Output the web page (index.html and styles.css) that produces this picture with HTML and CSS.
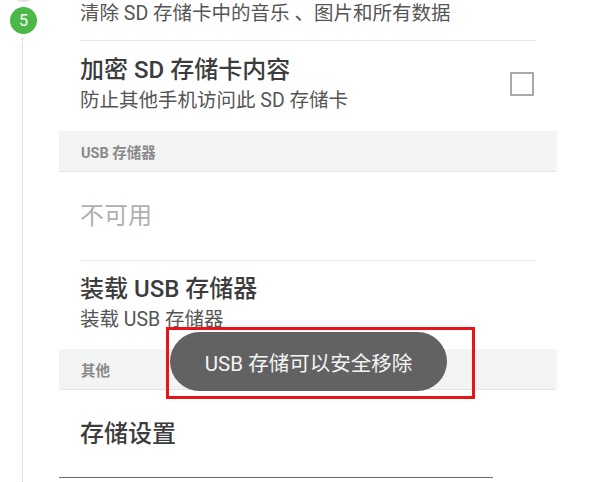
FILE: index.html
```html
<!DOCTYPE html>
<html lang="zh-CN">
<head>
<meta charset="utf-8">
<link rel="stylesheet" href="styles.css">
</head>
<body>
<div class="page">
  <div class="rail">
    <div class="step step-prev"></div>
    <div class="step step-current">5</div>
    <div class="rail-line"></div>
  </div>
  <div class="panel">
    <div class="row row-cut">
      <div class="sub">清除 SD 存储卡中的音乐 、图片和所有数据</div>
    </div>
    <div class="row row-check">
      <div class="texts">
        <div class="title">加密 SD 存储卡内容</div>
        <div class="sub">防止其他手机访问此 SD 存储卡</div>
      </div>
      <div class="checkbox"></div>
    </div>
    <div class="header">USB 存储器</div>
    <div class="row row-single">
      <div class="title disabled">不可用</div>
    </div>
    <div class="row row-double">
      <div class="texts">
        <div class="title">装载 USB 存储器</div>
        <div class="sub">装载 USB 存储器</div>
      </div>
    </div>
    <div class="header">其他</div>
    <div class="row row-single row-last">
      <div class="title">存储设置</div>
    </div>
  </div>
  <div class="toast">USB 存储可以安全移除</div>
  <div class="highlight"></div>
</div>
</body>
</html>
```
FILE: styles.css
```css
html, body {
  margin: 0;
  padding: 0;
  background: #fff;
}
body {
  font-family: Roboto, "Noto Sans CJK SC", sans-serif;
  overflow: hidden;
}
.page {
  position: relative;
  width: 593px;
  height: 482px;
  display: flex;
  overflow: hidden;
}
.rail {
  width: 59px;
  flex: none;
  position: relative;
}
.step {
  position: absolute;
  left: 10px;
  width: 27px;
  height: 27px;
  border-radius: 50%;
  display: flex;
  align-items: center;
  justify-content: center;
  color: #fff;
  font-size: 16px;
  font-family: Roboto, sans-serif;
}
.step-prev {
  top: -25px;
  background: #e3e3e3;
}
.step-current {
  top: 7px;
  background: #4cb848;
}
.rail-line {
  position: absolute;
  left: 22px;
  top: 38px;
  bottom: 0;
  border-left: 1px dotted #c8c8c8;
}
.panel {
  width: 500px;
  flex: none;
  display: flex;
  flex-direction: column;
}
.row {
  margin: 0 23px 0 21px;
  border-bottom: 1px solid #e8e8e8;
  display: flex;
  align-items: center;
}
.row-cut {
  height: 40px;
  align-items: flex-start;
}
.row-cut .sub {
  margin-top: -2px;
}
.row-check {
  height: 90px;
  border-bottom: none;
  justify-content: space-between;
}
.row-single {
  height: 88px;
}
.row-double {
  height: 88px;
  border-bottom: none;
}
.row-last {
  height: 87px;
  border-bottom: 1px solid #6a6a6a;
  margin-left: 0;
  padding-left: 21px;
  margin-right: 66px;
}
.texts {
  display: flex;
  flex-direction: column;
}
.title {
  font-size: 24px;
  color: #3c3c3c;
  line-height: 30px;
  font-weight: 500;
}
.title.disabled {
  color: #b0b0b0;
  font-weight: 400;
}
.sub {
  font-size: 19.5px;
  color: #555;
  line-height: 32px;
}
.row-last .title {
  margin-top: 1px;
}
.checkbox {
  width: 20px;
  height: 20px;
  border: 2px solid #a8a8a8;
  border-radius: 1px;
  margin-right: 2px;
  margin-top: -4px;
}
.header {
  height: 40px;
  background: #f2f3f3;
  border-bottom: 1px solid #e4e4e4;
  box-shadow: 3px 0 0 #f7f7f7;
  padding-left: 22px;
  display: flex;
  align-items: center;
  font-size: 14.5px;
  font-weight: 700;
  color: #8a8a8a;
  margin-right: 4px;
}
.toast {
  position: absolute;
  left: 170px;
  top: 332px;
  width: 277px;
  height: 59px;
  border-radius: 30px;
  background: #626262;
  color: #f4f4f4;
  font-size: 20.5px;
  display: flex;
  align-items: center;
  justify-content: center;
}
.highlight {
  position: absolute;
  left: 166px;
  top: 327px;
  width: 303px;
  height: 66px;
  border: 3px solid #e8141a;
}
```
